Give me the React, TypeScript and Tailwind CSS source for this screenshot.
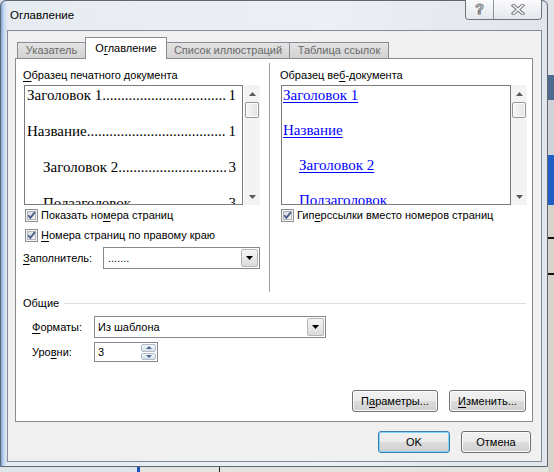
import React from 'react'

const SANS = "font-['Liberation_Sans',Arial,sans-serif]"
const SERIF = "font-['Liberation_Serif','Times_New_Roman',serif]"

// accelerator underline
function U({ children }: { children: React.ReactNode }) {
  return <span className="underline decoration-1 underline-offset-[2px]">{children}</span>
}

function Triangle({ up = false, color = '#000', w = 7, h = 4 }: { up?: boolean; color?: string; w?: number; h?: number }) {
  return (
    <svg width={w} height={h} viewBox={`0 0 ${w} ${h}`}>
      <path d={up ? `M0 ${h}L${w / 2} 0L${w} ${h}Z` : `M0 0L${w} 0L${w / 2} ${h}Z`} fill={color} />
    </svg>
  )
}

function CheckBox() {
  return (
    <svg width="13" height="13" viewBox="0 0 13 13" className="shrink-0">
      <defs>
        <linearGradient id="cbfill" x1="0" y1="0" x2="1" y2="1">
          <stop offset="0" stopColor="#d4d8de" />
          <stop offset="1" stopColor="#f6f6f6" />
        </linearGradient>
      </defs>
      <rect x="0.5" y="0.5" width="12" height="12" fill="#f4f4f4" stroke="#8e8f8f" />
      <rect x="2.5" y="2.5" width="8" height="8" fill="url(#cbfill)" stroke="#b4b8be" />
      <path d="M3.2 6.2L5.4 8.9L9.9 3.1" fill="none" stroke="#4a5c87" strokeWidth="1.8" />
    </svg>
  )
}

function DropButton() {
  return (
    <div className="flex w-[17px] items-center justify-center rounded-[2px] border border-[#b5b5b5] bg-[linear-gradient(#f6f6f6,#dcdcdc)]">
      <Triangle />
    </div>
  )
}

function ScrollBar() {
  return (
    <div className="flex w-[16px] flex-col bg-[#f3f3f3]">
      <div className="flex h-[17px] items-center justify-center">
        <Triangle up color="#5a5a5a" />
      </div>
      <div className="mx-px h-[16px] rounded-[2px] border border-[#979797] bg-[linear-gradient(to_right,#f7f7f7,#e3e3e3)] shadow-[inset_0_0_0_1px_#fdfdfd]" />
      <div className="flex-1" />
      <div className="flex h-[17px] items-center justify-center">
        <Triangle color="#5a5a5a" />
      </div>
    </div>
  )
}

function TocLine({ title, page, indent }: { title: string; page: string; indent?: boolean }) {
  return (
    <div className={`mb-[18px] flex h-[18px] items-center whitespace-nowrap ${indent ? 'pl-[16px]' : ''}`}>
      <span>{title}</span>
      <span className="mr-[3px] min-w-0 flex-1 overflow-hidden">{'.'.repeat(90)}</span>
      <span>{page}</span>
    </div>
  )
}

function WebLine({ title, indent }: { title: string; indent?: boolean }) {
  return (
    <div className={`mb-[17px] flex h-[18px] items-center whitespace-nowrap ${indent ? 'pl-[16px]' : ''}`}>
      <span className="text-[#0000ff] underline decoration-1 underline-offset-[2px]">{title}</span>
    </div>
  )
}

function Btn({ children, w, def }: { children: React.ReactNode; w: string; def?: boolean }) {
  return (
    <button
      className={`flex h-[22px] items-center justify-center rounded-[3px] border bg-[linear-gradient(#f2f2f2_0%,#ebebeb_49%,#dddddd_50%,#cfcfcf_100%)] ${
        def ? 'border-[#3c7fb1] shadow-[inset_0_0_0_1px_#7fd6fa]' : 'border-[#707070] shadow-[inset_0_0_0_1px_#fbfbfb]'
      } ${w}`}
    >
      {children}
    </button>
  )
}

export default function App() {
  return (
    <div className={`flex h-[472px] w-[554px] overflow-hidden bg-[#d9dde3] text-[11px] leading-[15px] text-black ${SANS}`}>
      <div className="flex w-[548px] flex-col">
        {/* window */}
        <div className="flex h-[467px] flex-col rounded-t-[6px] border border-[#5f6771] bg-[linear-gradient(to_right,#7ea6dc_0px,#c9d9ee_3px,#e7ecf2_7px,#eceff3_60%,#e1e6ec_100%)]">
          {/* title bar */}
          <div className="flex h-[29px] items-start justify-between">
            <div className="pl-[9px] pt-[7px] text-[11.5px]">Оглавление</div>
            <div className="-mt-px mr-[5px] flex h-[20px] overflow-hidden rounded-b-[4px] border border-t-0 border-[#6d737b]">
              <div className="flex w-[28px] items-center justify-center border-r border-[#8d939b] bg-[linear-gradient(#fbfbfc,#e3e7ec)] text-[14px] font-bold text-[#f6f6f6] [-webkit-text-stroke:1px_#727780]">
                ?
              </div>
              <div className="flex w-[47px] items-center justify-center bg-[linear-gradient(#fbfbfc,#e3e7ec)]">
                <svg width="14" height="11" viewBox="0 0 14 11">
                  <path d="M2.5 1.5L11.5 9.5M11.5 1.5L2.5 9.5" stroke="#767b83" strokeWidth="3.6" strokeLinecap="square" />
                  <path d="M2.5 1.5L11.5 9.5M11.5 1.5L2.5 9.5" stroke="#f7f7f7" strokeWidth="1.6" strokeLinecap="square" />
                </svg>
              </div>
            </div>
          </div>

          {/* client area */}
          <div className="ml-[6px] flex h-[432px] w-[535px] flex-col border border-[#858c96] bg-[#f0f0f0] pl-[7px] pr-[8px] pt-[6px]">
            {/* tabs */}
            <div className="relative z-10 flex h-[22px] items-end pl-[2px]">
              <div className="mb-px flex h-[16px] w-[68px] items-center justify-center border border-r-0 border-b-0 border-[#898c95] bg-[linear-gradient(#e4e4e4,#d2d2d2)] text-[#6a6a6a]">
                Указатель
              </div>
              <div className="flex h-[22px] w-[82px] items-start justify-center border border-b-0 border-[#898c95] bg-white pt-[3px]">
                <span>
                  О<U>г</U>лавление
                </span>
              </div>
              <div className="mb-px flex h-[16px] w-[123px] items-center justify-center border border-l-0 border-b-0 border-[#898c95] bg-[linear-gradient(#e4e4e4,#d2d2d2)] text-[#6a6a6a]">
                Список иллюстраций
              </div>
              <div className="mb-px flex h-[16px] w-[99px] items-center justify-center border border-l-0 border-b-0 border-[#898c95] bg-[linear-gradient(#e4e4e4,#d2d2d2)] text-[#6a6a6a]">
                Таблица ссылок
              </div>
            </div>

            {/* tab panel */}
            <div className="-mt-px flex h-[364px] w-[518px] flex-col border border-[#898c95] bg-white pl-[7px] pr-[5px] pt-[4px]">
              <div className="flex h-[229px]">
                {/* print preview */}
                <div className="flex w-[238px] flex-col">
                  <div className="mt-[5px] h-[15px]">
                    <U>О</U>бразец печатного документа
                  </div>
                  <div className="mt-[2px] flex h-[120px] pl-px">
                    <div className={`h-[120px] w-[219px] overflow-hidden border border-[#7a7a7a] pl-[2px] pr-[6px] text-[15px] ${SERIF}`}>
                      <TocLine title="Заголовок 1" page="1" />
                      <TocLine title="Название" page="1" />
                      <TocLine title="Заголовок 2" page="3" indent />
                      <TocLine title="Подзаголовок" page="3" indent />
                    </div>
                    <div className="ml-px flex">
                      <ScrollBar />
                    </div>
                  </div>
                  <div className="flex h-[20px] items-center gap-[3px] pl-[2px]">
                    <CheckBox />
                    <span>
                      Показать но<U>м</U>ера страниц
                    </span>
                  </div>
                  <div className="flex h-[20px] items-center gap-[3px] pl-[2px]">
                    <CheckBox />
                    <span>
                      <U>Н</U>омера страниц по правому краю
                    </span>
                  </div>
                  <div className="mt-[2px] flex h-[22px] items-center">
                    <div className="w-[80px]">
                      <U>З</U>аполнитель:
                    </div>
                    <div className="flex h-[22px] w-[157px] border border-[#828790] bg-white p-px">
                      <div className="flex-1 pl-[3px] leading-[18px]">.......</div>
                      <DropButton />
                    </div>
                  </div>
                </div>

                <div className="ml-[8px] w-px bg-[#a0a0a0]" />

                {/* web preview */}
                <div className="ml-[10px] flex w-[247px] flex-col">
                  <div className="mt-[5px] h-[15px]">
                    Образец ве<U>б</U>-документа
                  </div>
                  <div className="mt-[2px] flex h-[120px] pl-px">
                    <div className={`h-[120px] w-[230px] overflow-hidden border border-[#7a7a7a] pl-px text-[15px] ${SERIF}`}>
                      <WebLine title="Заголовок 1" />
                      <WebLine title="Название" />
                      <WebLine title="Заголовок 2" indent />
                      <WebLine title="Подзаголовок" indent />
                    </div>
                    <ScrollBar />
                  </div>
                  <div className="flex h-[20px] items-center gap-[3px] pl-px">
                    <CheckBox />
                    <span>
                      Гип<U>е</U>рссылки вместо номеров страниц
                    </span>
                  </div>
                </div>
              </div>

              {/* general */}
              <div className="mt-[4px] flex h-[15px] items-center">
                <span>Общие</span>
                <div className="ml-[5px] mr-[1px] h-px flex-1 bg-[#d5dfe5]" />
              </div>
              <div className="mt-[5px] flex h-[22px] items-center pl-[9px]">
                <div className="w-[62px]">
                  <U>Ф</U>орматы:
                </div>
                <div className="flex h-[22px] w-[232px] border border-[#828790] bg-white p-px">
                  <div className="flex-1 pl-[2px] leading-[18px]">Из шаблона</div>
                  <DropButton />
                </div>
              </div>
              <div className="mt-[4px] flex h-[20px] items-center pl-[9px]">
                <div className="w-[62px]">
                  Уро<U>в</U>ни:
                </div>
                <div className="flex h-[20px] w-[64px] border border-[#828790] bg-white p-px">
                  <div className="flex-1 pl-[2px] leading-[16px]">3</div>
                  <div className="flex w-[15px] flex-col gap-px">
                    <div className="flex flex-1 items-center justify-center rounded-[2px] border border-[#b3bdc8] bg-[linear-gradient(#f4f7fa,#d6dee7)]">
                      <Triangle up color="#4f6a90" w={6} h={3} />
                    </div>
                    <div className="flex flex-1 items-center justify-center rounded-[2px] border border-[#b3bdc8] bg-[linear-gradient(#f4f7fa,#d6dee7)]">
                      <Triangle color="#4f6a90" w={6} h={3} />
                    </div>
                  </div>
                </div>
              </div>

              <div className="mt-[28px] flex justify-end gap-[11px] pr-px">
                <Btn w="w-[86px]">
                  П<U>а</U>раметры...
                </Btn>
                <Btn w="w-[77px]">
                  <U>И</U>зменить...
                </Btn>
              </div>
            </div>

            {/* dialog buttons */}
            <div className="mt-[9px] flex justify-end gap-[11px] pr-[2px]">
              <Btn w="w-[72px]" def>
                OK
              </Btn>
              <Btn w="w-[70px]">Отмена</Btn>
            </div>
          </div>
        </div>

        {/* desktop below the window */}
        <div className="flex h-[5px]">
          <div className="w-[137px] bg-[#dfe4ea]" />
          <div className="w-[3px] bg-[#1d4fc0]" />
          <div className="w-[79px] bg-[#e4e4de]" />
          <div className="w-px bg-[#222]" />
          <div className="flex-1 bg-[#e4e4de]" />
        </div>
      </div>

      {/* desktop right of the window */}
      <div className="flex w-[6px] flex-col">
        <div className="h-[75px] bg-[#e2e4e8]" />
        <div className="h-[25px] bg-[#4f6b8f]" />
        <div className="h-[55px] bg-[#cfd3d8]" />
        <div className="h-[50px] bg-[#1f5fc6]" />
        <div className="h-[32px] bg-[#d6d3ca]" />
        <div className="h-[2px] bg-[#111]" />
        <div className="h-[34px] bg-[#d6d3ca]" />
        <div className="h-[2px] bg-[#111]" />
        <div className="flex-1 bg-[#d6d3ca]" />
      </div>
    </div>
  )
}
